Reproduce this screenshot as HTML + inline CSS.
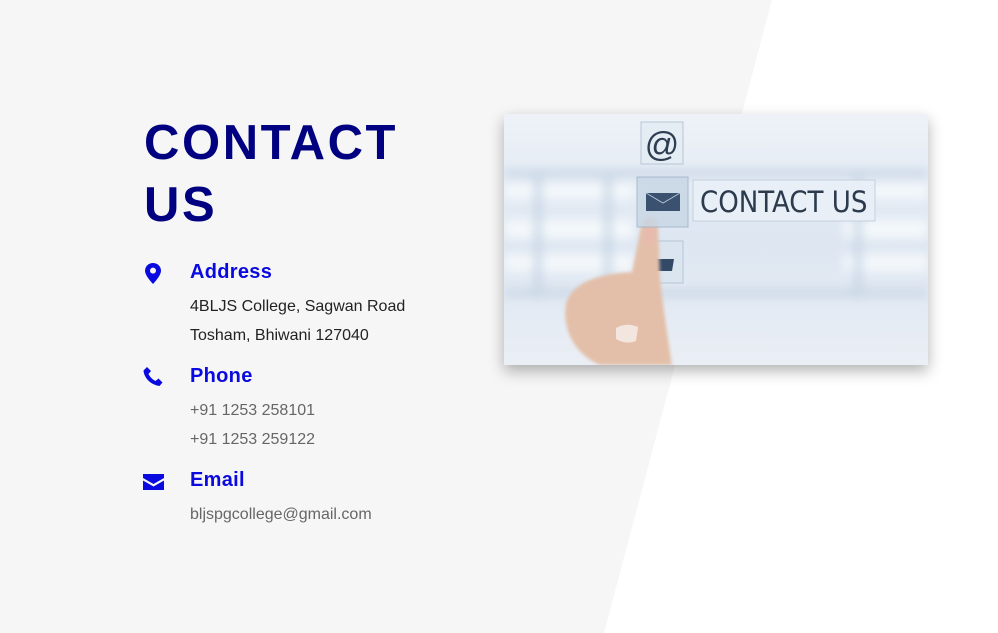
<!DOCTYPE html>
<html><head><meta charset="utf-8"><style>
*{margin:0;padding:0;box-sizing:border-box}
body{width:998px;height:633px;overflow:hidden;background:#fff;position:relative;font-family:"Liberation Sans",sans-serif}
.bg{position:absolute;inset:0}
h1{position:absolute;left:144px;top:112px;font-size:49px;line-height:62px;color:#000080;letter-spacing:2.6px;font-weight:bold}
.lbl{position:absolute;left:190px;font-size:20px;color:#0a0ae0;font-weight:bold;letter-spacing:.3px}
.txt{position:absolute;left:190px;font-size:16px;line-height:28.5px;color:#222}
.g{color:#666}
.ic{position:absolute;left:142px}
</style></head><body>
<svg class="bg" width="998" height="633"><polygon points="0,0 772,0 604,633 0,633" fill="#f6f6f6"/></svg>
<h1>CONTACT<br>US</h1>
<svg class="ic" style="top:263px;left:145px" width="16" height="21" viewBox="0 0 16 21"><path d="M8 0C3.6 0 0 3.4 0 7.8 0 13 8 21 8 21s8-8 8-13.2C16 3.4 12.4 0 8 0z" fill="#0a0ae0"/><circle cx="8" cy="7.6" r="3" fill="#f6f6f6"/></svg>
<div class="lbl" style="top:261px">Address</div>
<div class="txt" style="top:293px">4BLJS College, Sagwan Road<br>Tosham, Bhiwani 127040</div>
<svg class="ic" style="top:367px;left:143px" width="20" height="20" viewBox="0 0 20 20"><path d="M4 0l4 4-2.5 3c1.5 3 4 5.5 7 7l3-2.5 4 4-3 3.5C8 18 1 11 .5 3.5z" fill="#0a0ae0"/></svg>
<div class="lbl" style="top:365px">Phone</div>
<div class="txt g" style="top:397px">+91 1253 258101<br>+91 1253 259122</div>
<svg class="ic" style="top:474px;left:143px" width="21" height="16" viewBox="0 0 21 16"><path d="M0 0h21v4l-10.5 6L0 4z M0 6.5l10.5 6 10.5-6V16H0z" fill="#0a0ae0"/></svg>
<div class="lbl" style="top:469px">Email</div>
<div class="txt g" style="top:501px">bljspgcollege@gmail.com</div>
<div style="position:absolute;left:504px;top:114px;width:424px;height:251px;box-shadow:0 6px 14px rgba(0,0,0,.3);overflow:hidden">
<svg width="424" height="251" viewBox="0 0 424 251">
<defs><linearGradient id="a" x1="0" y1="0" x2="0" y2="1"><stop offset="0" stop-color="#eef2f8"/><stop offset=".5" stop-color="#dde6f1"/><stop offset="1" stop-color="#eaeef5"/></linearGradient>
<filter id="b"><feGaussianBlur stdDeviation="5"/></filter><filter id="c"><feGaussianBlur stdDeviation="1.5"/></filter></defs>
<rect width="424" height="251" fill="url(#a)"/>
<g filter="url(#b)" fill="#f6f9fc" opacity=".9">
<rect x="0" y="70" width="130" height="15"/><rect x="0" y="105" width="130" height="20"/><rect x="0" y="140" width="130" height="18"/>
<rect x="340" y="70" width="84" height="15"/><rect x="340" y="105" width="84" height="20"/><rect x="340" y="140" width="84" height="18"/>
</g>
<g filter="url(#b)" fill="#c4d3e3" opacity=".8"><rect x="0" y="55" width="424" height="8"/><rect x="0" y="175" width="424" height="8"/><rect x="30" y="55" width="8" height="130"/><rect x="100" y="55" width="8" height="130"/><rect x="350" y="55" width="8" height="130"/></g>
<rect x="137" y="8" width="42" height="42" fill="#e4ecf4" stroke="#b7c6d6"/>
<text x="158" y="42" font-size="34" text-anchor="middle" fill="#2d3d52" font-family="Liberation Sans">@</text>
<rect x="189" y="66" width="182" height="41" fill="#e8eff6" stroke="#c3d1de"/>
<text x="196" y="98" font-size="29" fill="#2b3a4c" font-family="DejaVu Sans Condensed, Liberation Sans Narrow, sans-serif">CONTACT US</text>
<rect x="137" y="127" width="42" height="42" fill="#dbe5ef" stroke="#b7c6d6"/>
<path d="M146 145h24l-2 12h-20z" fill="#324a66"/>
<g filter="url(#c)">
<path d="M96 251 C 70 240, 58 215, 62 190 C 68 168, 95 160, 128 158 L 138 108 C 142 100, 152 100, 154 110 L 156 165 C 160 200, 165 230, 168 251Z" fill="#e3bfa9"/>
<path d="M140 108 C 143 102, 151 102, 152 110 L 150 130 L 140 130Z" fill="#e8b9b0" opacity=".6"/>
</g>
<rect x="133" y="63" width="51" height="50" fill="#c9d8e6" stroke="#9fb3c7" opacity=".85"/>
<path d="M142 79h34v18h-34z" fill="#3a5270"/><path d="M142 79l17 10 17-10" stroke="#b0c2d4" fill="none"/>
<path d="M112 214 q10-6 22-1 l-2 14 q-10 4 -20-2z" fill="#f3e6df"/>
</svg></div>
</body></html>
